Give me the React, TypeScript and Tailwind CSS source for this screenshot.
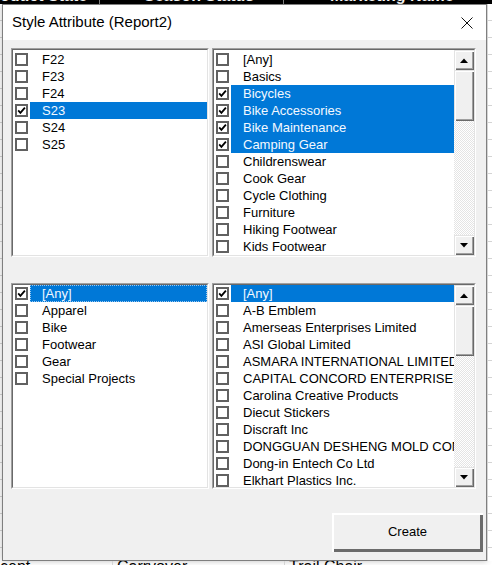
import React from "react";

const topLeft = [
    { label: "F22", checked: false, sel: false },
    { label: "F23", checked: false, sel: false },
    { label: "F24", checked: false, sel: false },
    { label: "S23", checked: true, sel: true },
    { label: "S24", checked: false, sel: false },
    { label: "S25", checked: false, sel: false },
];

const topRight = [
    { label: "[Any]", checked: false, sel: false },
    { label: "Basics", checked: false, sel: false },
    { label: "Bicycles", checked: true, sel: true },
    { label: "Bike Accessories", checked: true, sel: true },
    { label: "Bike Maintenance", checked: true, sel: true },
    { label: "Camping Gear", checked: true, sel: true },
    { label: "Childrenswear", checked: false, sel: false },
    { label: "Cook Gear", checked: false, sel: false },
    { label: "Cycle Clothing", checked: false, sel: false },
    { label: "Furniture", checked: false, sel: false },
    { label: "Hiking Footwear", checked: false, sel: false },
    { label: "Kids Footwear", checked: false, sel: false },
];

const bottomLeft = [
    { label: "[Any]", checked: true, sel: true, focus: true },
    { label: "Apparel", checked: false, sel: false },
    { label: "Bike", checked: false, sel: false },
    { label: "Footwear", checked: false, sel: false },
    { label: "Gear", checked: false, sel: false },
    { label: "Special Projects", checked: false, sel: false },
];

const bottomRight = [
    { label: "[Any]", checked: true, sel: true },
    { label: "A-B Emblem", checked: false, sel: false },
    { label: "Amerseas Enterprises Limited", checked: false, sel: false },
    { label: "ASI Global Limited", checked: false, sel: false },
    { label: "ASMARA INTERNATIONAL LIMITED", checked: false, sel: false },
    { label: "CAPITAL CONCORD ENTERPRISES LIMITED", checked: false, sel: false },
    { label: "Carolina Creative Products", checked: false, sel: false },
    { label: "Diecut Stickers", checked: false, sel: false },
    { label: "Discraft Inc", checked: false, sel: false },
    { label: "DONGGUAN DESHENG MOLD COMPANY", checked: false, sel: false },
    { label: "Dong-in Entech Co Ltd", checked: false, sel: false },
    { label: "Elkhart Plastics Inc.", checked: false, sel: false },
];

type Item = { label: string; checked: boolean; sel: boolean; focus?: boolean };

function CheckBox({ checked }: { checked: boolean }) {
    return (
        <span className="w-[13px] h-[13px] border-2 border-[#616161] bg-white flex items-center justify-center shrink-0">
            {checked && (
                <svg width="9" height="9" viewBox="0 0 9 9">
                    <path d="M1.2 4.4 L3.4 6.8 L7.9 1.6" fill="none" stroke="#000" strokeWidth="1.8" />
                </svg>
            )}
        </span>
    );
}

function Arrow({ up }: { up: boolean }) {
    return (
        <svg width="8" height="5" viewBox="0 0 8 5">
            <path d={up ? "M0 5 L4 0.5 L8 5 Z" : "M0 0 L4 4.5 L8 0 Z"} fill="#000" />
        </svg>
    );
}

function ScrollBar() {
    const btn = "bg-[#f0f0f0] shadow-[inset_1px_1px_0_#e3e3e3,inset_2px_2px_0_#ffffff,inset_-1px_-1px_0_#696969,inset_-2px_-2px_0_#a0a0a0]";
    return (
        <div className="w-[20px] h-full flex flex-col shrink-0">
            <div className={`h-[20px] flex items-center justify-center ${btn}`}>
                <Arrow up />
            </div>
            <div className={`h-[51px] ${btn}`} />
            <div className="flex-1 bg-[repeating-conic-gradient(#e4e4e4_0%_25%,#ffffff_0%_50%)] bg-[length:2px_2px]" />
            <div className={`h-[20px] flex items-center justify-center ${btn}`}>
                <Arrow up={false} />
            </div>
        </div>
    );
}

function ListBox({ items, width, height, scroll, padTop }: { items: Item[]; width: string; height: string; scroll?: boolean; padTop?: boolean }) {
    return (
        <div className={`${width} ${height} shrink-0 border border-[#a0a0a0] border-r-white border-b-white`}>
            <div className="w-full h-full border border-[#696969] border-r-[#e3e3e3] border-b-[#e3e3e3] bg-white flex overflow-hidden">
                <div className={`flex-1 min-w-0 flex flex-col ${padTop ? "pt-[1px]" : ""}`}>
                    {items.map((it) => (
                        <div key={it.label} className="h-[17px] shrink-0 flex items-center pl-[2px]">
                            <CheckBox checked={it.checked} />
                            <div
                                className={`ml-[2px] flex-1 min-w-0 h-full flex items-center pl-[12px] whitespace-nowrap overflow-hidden ${
                                    it.sel ? "bg-[#0078d7] text-[#f4f9ff]" : "text-black"
                                } ${it.focus ? "outline-1 outline-dotted outline-[#9ac8f0] -outline-offset-1" : ""}`}
                            >
                                {it.label}
                            </div>
                        </div>
                    ))}
                </div>
                {scroll && <ScrollBar />}
            </div>
        </div>
    );
}

export default function App() {
    return (
        <div className="w-[492px] h-[565px] overflow-hidden bg-white flex flex-col font-['Liberation_Sans',Arial,sans-serif]">
            {/* sheet header behind the dialog */}
            <div className="h-[4px] bg-black flex overflow-hidden text-white text-[16px] leading-[16px] font-bold shrink-0">
                <div className="w-[100px] -mt-[12px] pl-[0px] border-r border-[#888]">oduct State</div>
                <div className="w-[184px] -mt-[12px] pl-[44px] border-r border-[#888]">Season Status</div>
                <div className="flex-1 -mt-[12px] pl-[46px]">Marketing Name</div>
            </div>

            <div className="flex flex-1 min-h-0">
                <div className="w-[2px] shrink-0 bg-[repeating-linear-gradient(to_bottom,#ffffff_0px,#ffffff_16px,#d4d4d4_16px,#d4d4d4_17px)]" />

                {/* dialog */}
                <div className="w-[485px] h-[557px] shrink-0 border border-[#7f7f7f] bg-[#f0f0f0] flex flex-col shadow-[0_0_6px_rgba(0,0,0,0.25)]">
                    <div className="h-[35px] bg-white flex items-center justify-between pl-[9px] pr-[13px] shrink-0">
                        <span className="text-[15px] text-black font-['Liberation_Sans',Arial,sans-serif]">Style Attribute (Report2)</span>
                        <svg width="12" height="12" viewBox="0 0 12 12">
                            <path d="M0.5 0.5 L11.5 11.5 M11.5 0.5 L0.5 11.5" stroke="#111" strokeWidth="1" />
                        </svg>
                    </div>

                    <div className="flex flex-col pt-[8px] pl-[8px] text-[13px]">
                        <div className="flex gap-[3px]">
                            <ListBox items={topLeft} width="w-[198px]" height="h-[209px]" padTop />
                            <ListBox items={topRight} width="w-[264px]" height="h-[209px]" scroll padTop />
                        </div>
                        <div className="flex gap-[3px] mt-[26px]">
                            <ListBox items={bottomLeft} width="w-[198px]" height="h-[206px]" />
                            <ListBox items={bottomRight} width="w-[264px]" height="h-[206px]" scroll />
                        </div>
                    </div>

                    <div className="flex justify-end pr-[3px] mt-[24px]">
                        <button className="w-[151px] h-[39px] bg-[#f0f0f0] text-[13px] text-black shadow-[inset_2px_2px_0_#ffffff,inset_-3px_-3px_0_#6b6b6b] pb-[1px]">
                            Create
                        </button>
                    </div>
                </div>

                <div className="flex-1 border-l border-[#d4d4d4] bg-[repeating-linear-gradient(to_bottom,#ffffff_0px,#ffffff_16px,#d4d4d4_16px,#d4d4d4_17px)]" />
            </div>

            {/* sheet row below the dialog */}
            <div className="h-[4px] flex overflow-hidden text-black text-[16px] leading-[16px] shrink-0">
                <div className="w-[113px] -mt-[2px] border-r border-[#d4d4d4]">cent</div>
                <div className="w-[172px] -mt-[2px] pl-[4px] border-r border-[#d4d4d4]">Carryover</div>
                <div className="flex-1 -mt-[2px] pl-[4px]">Trail Chair</div>
            </div>
        </div>
    );
}
